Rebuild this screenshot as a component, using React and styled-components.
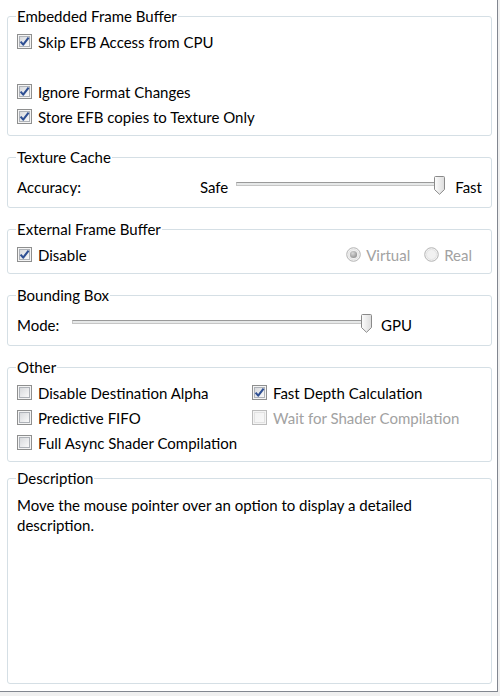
import React from "react";
import styled, { createGlobalStyle } from "styled-components";

const GlobalStyle = createGlobalStyle`
  html, body {
    margin: 0;
    padding: 0;
    background: #f0f0f0;
  }
  body {
    font-family: Lato, "Noto Sans", sans-serif;
    font-size: 15px;
    color: #000;
  }
`;

const CheckBox = ({ checked, disabled }) => (
  <svg width="15" height="15" viewBox="0 0 15 15">
    <defs>
      <linearGradient id={disabled ? "cbd" : "cbn"} x1="0" y1="0" x2="1" y2="1">
        <stop offset="0" stopColor={disabled ? "#f2f2f2" : "#d6d8db"} />
        <stop offset="1" stopColor={disabled ? "#f8f8f8" : "#fbfbfb"} />
      </linearGradient>
    </defs>
    <rect x="0.5" y="0.5" width="14" height="14" fill="#f4f4f4" stroke={disabled ? "#bcbcbc" : "#8e8f8f"} />
    <rect x="2.5" y="2.5" width="10" height="10" fill={`url(#${disabled ? "cbd" : "cbn"})`} stroke={disabled ? "#e2e2e2" : "#aeb2b8"} />
    {checked && (
      <path d="M3.6 7.6 L6.2 10.6 L11.6 3.6" fill="none" stroke="#2e4f93" strokeWidth="2.1" strokeLinejoin="round" />
    )}
  </svg>
);

const RadioDot = ({ checked }) => (
  <svg width="15" height="15" viewBox="0 0 15 15">
    <defs>
      <radialGradient id="rdot" cx="0.4" cy="0.35" r="0.7">
        <stop offset="0" stopColor="#d9d9d9" />
        <stop offset="1" stopColor="#8f8f8f" />
      </radialGradient>
    </defs>
    <circle cx="7.5" cy="7.5" r="6.8" fill="#f1f1f1" stroke="#b5b5b5" />
    <circle cx="7.5" cy="7.5" r="5" fill="none" stroke="#e4e4e4" />
    {checked && <circle cx="7.5" cy="7.5" r="3.6" fill="url(#rdot)" />}
  </svg>
);

const Thumb = () => (
  <svg width="11" height="19" viewBox="0 0 11 19">
    <defs>
      <linearGradient id="thumb" x1="0" y1="0" x2="1" y2="0">
        <stop offset="0" stopColor="#fdfdfd" />
        <stop offset="1" stopColor="#dcdcdc" />
      </linearGradient>
    </defs>
    <path
      d="M1.5 0.5 H9.5 Q10.5 0.5 10.5 1.5 V13.5 L5.5 18.3 L0.5 13.5 V1.5 Q0.5 0.5 1.5 0.5 Z"
      fill="url(#thumb)"
      stroke="#8a8a8a"
    />
  </svg>
);

const Panel = styled.div`
  box-sizing: border-box;
  width: 498px;
  height: 692px;
  background: #fff;
  border-right: 1px solid #828790;
  border-bottom: 1px solid #828790;
  padding: 7px 5px 7px 7px;
  display: flex;
  flex-direction: column;
`;

const Group = styled.fieldset`
  margin: ${(p) => p.$space || 0}px 0 0;
  padding: 4px 9px 6px;
  border: 1px solid #d5dfe5;
  border-radius: 3px;
  min-width: 0;
  ${(p) => p.$grow && "flex: 1;"}
`;

const Legend = styled.legend`
  padding: 0 1px;
  margin-left: -1px;
  line-height: 18px;
`;

const Row = styled.div`
  box-sizing: border-box;
  display: flex;
  align-items: center;
  height: ${(p) => p.$h || 25}px;
  padding-top: ${(p) => p.$top || 0}px;
`;

const Check = styled.label`
  display: inline-flex;
  align-items: center;
  gap: 6px;
  white-space: nowrap;
  color: ${(p) => (p.$disabled ? "#a2a2a2" : "#000")};
  svg {
    flex: none;
  }
`;

const Radios = styled.div`
  display: flex;
  gap: 14px;
  margin-left: auto;
  padding-right: 10px;
`;

const Radio = styled.label`
  display: inline-flex;
  align-items: center;
  gap: 5px;
  color: #a2a2a2;
`;

const Label = styled.span`
  ${(p) => (p.$w ? `width: ${p.$w}px; flex: none;` : "flex: 1;")}
`;

const SliderBox = styled.div`
  position: relative;
  flex: none;
  width: ${(p) => p.$w}px;
  height: 19px;
  margin: 0 ${(p) => p.$right}px 4px ${(p) => p.$left}px;
`;

const Track = styled.div`
  position: absolute;
  left: 5px;
  right: 9px;
  top: 6px;
  height: 2px;
  border: 1px solid #c6c6c6;
  border-top-color: #9a9a9a;
  background: #e6e8e8;
`;

const ThumbHolder = styled.div`
  position: absolute;
  right: 4px;
  top: 0;
  height: 19px;
  svg {
    display: block;
  }
`;

const Options = styled.div`
  display: grid;
  grid-template-columns: 235px 1fr;
  grid-auto-rows: 25px;
  align-items: center;
`;

const Description = styled.p`
  margin: 0;
  padding-top: 4px;
  line-height: 20px;
  max-width: 440px;
`;

const Slider = ({ width, left = 0, right = 0 }) => (
  <SliderBox $w={width} $left={left} $right={right}>
    <Track />
    <ThumbHolder>
      <Thumb />
    </ThumbHolder>
  </SliderBox>
);

const Option = ({ checked, disabled, children }) => (
  <Check $disabled={disabled}>
    <CheckBox checked={checked} disabled={disabled} />
    {children}
  </Check>
);

const App = () => {
  return (
    <>
      <GlobalStyle />
      <Panel>
        <Group>
          <Legend>Embedded Frame Buffer</Legend>
          <Row>
            <Option checked>Skip EFB Access from CPU</Option>
          </Row>
          <Row />
          <Row>
            <Option checked>Ignore Format Changes</Option>
          </Row>
          <Row>
            <Option checked>Store EFB copies to Texture Only</Option>
          </Row>
        </Group>

        <Group $space={12}>
          <Legend>Texture Cache</Legend>
          <Row $h={31} $top={3}>
            <Label>Accuracy:</Label>
            <span>Safe</span>
            <Slider width={218} left={3} right={6} />
            <span>Fast</span>
          </Row>
        </Group>

        <Group $space={12}>
          <Legend>External Frame Buffer</Legend>
          <Row>
            <Option checked>Disable</Option>
            <Radios>
              <Radio>
                <RadioDot checked />
                Virtual
              </Radio>
              <Radio>
                <RadioDot />
                Real
              </Radio>
            </Radios>
          </Row>
        </Group>

        <Group $space={12}>
          <Legend>Bounding Box</Legend>
          <Row $h={31} $top={3}>
            <Label $w={50}>Mode:</Label>
            <Slider width={309} right={5} />
            <span>GPU</span>
          </Row>
        </Group>

        <Group $space={12}>
          <Legend>Other</Legend>
          <Options>
            <Option>Disable Destination Alpha</Option>
            <Option checked>Fast Depth Calculation</Option>
            <Option>Predictive FIFO</Option>
            <Option disabled>Wait for Shader Compilation</Option>
            <Option>Full Async Shader Compilation</Option>
          </Options>
        </Group>

        <Group $space={7} $grow>
          <Legend>Description</Legend>
          <Description>
            Move the mouse pointer over an option to display a detailed description.
          </Description>
        </Group>
      </Panel>
    </>
  );
};

export default App;
